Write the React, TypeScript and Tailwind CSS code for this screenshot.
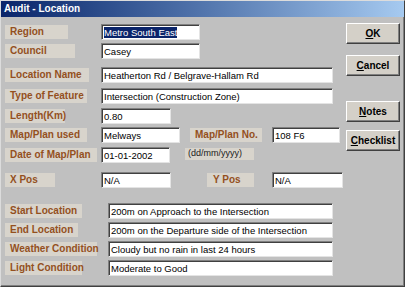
import type { ReactNode } from "react";

function Label({
  w,
  children,
  className = "",
}: {
  w: string;
  children: ReactNode;
  className?: string;
}) {
  return (
    <div
      className={`${w} h-[14px] mt-[1px] shrink-0 bg-[#d8d4cc] text-[#94501e] font-bold text-[10px] leading-[14px] pl-[5px] whitespace-nowrap ${className}`}
    >
      {children}
    </div>
  );
}

function Field({
  w,
  value,
  selected = false,
  className = "",
}: {
  w: string;
  value: string;
  selected?: boolean;
  className?: string;
}) {
  return (
    <div
      className={`${w} h-[16px] shrink-0 bg-white border border-t-[#808080] border-l-[#808080] border-r-[#e4e4e4] border-b-[#e4e4e4] shadow-[inset_1px_1px_0_#404040] pl-[2px] pt-[1px] text-[9.5px] leading-[13px] text-black whitespace-nowrap overflow-hidden ${className}`}
    >
      {selected ? (
        <span className="bg-[#0a246a] text-white">{value}</span>
      ) : (
        value
      )}
    </div>
  );
}

function Button({ mnemonic, rest, className = "" }: { mnemonic: string; rest: string; className?: string }) {
  return (
    <button
      className={`w-[54px] h-[21px] bg-[#d4d0c8] border border-t-white border-l-white border-r-[#404040] border-b-[#404040] shadow-[inset_-1px_-1px_0_#808080] text-[10px] font-bold text-black leading-none ${className}`}
    >
      <span className="underline">{mnemonic}</span>
      {rest}
    </button>
  );
}

export default function App() {
  return (
    <div className="min-h-screen bg-white">
      <div className="w-[405px] h-[287px] bg-[#c0c0c0] border-t border-l border-t-[#dcdcdc] border-l-[#dcdcdc] border-r border-b border-r-[#404040] border-b-[#404040] shadow-[inset_-1px_-1px_0_#808080] flex flex-col font-['Liberation_Sans',Arial,sans-serif]">
        <div className="h-[16px] shrink-0 bg-gradient-to-r from-[#0a246a] to-[#a6caf0] text-white font-bold text-[10px] leading-[16px] pl-[3px]">
          Audit - Location
        </div>

        <div className="flex">
          <div className="w-[345px] shrink-0 flex flex-col">
            <div className="flex mt-[7px]">
              <div className="w-[100px] shrink-0 pl-[4px]">
                <Label w="w-[63px]" className="mt-0 h-[13px] leading-[13px]">Region</Label>
              </div>
              <Field w="w-[99px]" value="Metro South East" selected />
            </div>

            <div className="flex mt-[3px]">
              <div className="w-[100px] shrink-0 pl-[4px]">
                <Label w="w-[70px]" className="mt-0">Council</Label>
              </div>
              <Field w="w-[99px]" value="Casey" />
            </div>

            <div className="flex mt-[8px]">
              <div className="w-[100px] shrink-0 pl-[4px]">
                <Label w="w-[84px]">Location Name</Label>
              </div>
              <Field w="w-[232px]" value="Heatherton Rd / Belgrave-Hallam Rd" />
            </div>

            <div className="flex mt-[5px]">
              <div className="w-[100px] shrink-0 pl-[4px]">
                <Label w="w-[82px]">Type of Feature</Label>
              </div>
              <Field w="w-[232px]" value="Intersection (Construction Zone)" />
            </div>

            <div className="flex mt-[4px]">
              <div className="w-[100px] shrink-0 pl-[4px]">
                <Label w="w-[60px]">Length(Km)</Label>
              </div>
              <Field w="w-[70px]" value="0.80" />
            </div>

            <div className="flex mt-[3px]">
              <div className="w-[100px] shrink-0 pl-[4px]">
                <Label w="w-[82px]">Map/Plan used</Label>
              </div>
              <Field w="w-[79px]" value="Melways" />
              <Label w="w-[72px]" className="ml-[10px] pl-[4px]">Map/Plan No.</Label>
              <Field w="w-[68px]" value="108 F6" className="ml-[10px]" />
            </div>

            <div className="flex mt-[4px]">
              <div className="w-[100px] shrink-0 pl-[4px]">
                <Label w="w-[92px]">Date of Map/Plan</Label>
              </div>
              <Field w="w-[69px]" value="01-01-2002" />
              <div className="ml-[15px] mt-[1px] w-[69px] h-[12px] bg-[#d8d4cc] text-[9px] leading-[11px] text-[#202020] pl-[3px] whitespace-nowrap">
                (dd/mm/yyyy)
              </div>
            </div>

            <div className="flex mt-[9px]">
              <div className="w-[100px] shrink-0 pl-[4px]">
                <Label w="w-[50px]" className="-mt-[2px]">X Pos</Label>
              </div>
              <Field w="w-[70px]" value="N/A" />
              <Label w="w-[47px]" className="ml-[36px] -mt-[2px] pl-[6px]">Y Pos</Label>
              <Field w="w-[71px]" value="N/A" className="ml-[18px]" />
            </div>

            <div className="flex mt-[15px]">
              <div className="w-[107px] shrink-0 pl-[4px]">
                <Label w="w-[77px]">Start Location</Label>
              </div>
              <Field w="w-[225px]" value="200m on Approach to the Intersection" />
            </div>

            <div className="flex mt-[3px]">
              <div className="w-[107px] shrink-0 pl-[4px]">
                <Label w="w-[73px]">End Location</Label>
              </div>
              <Field w="w-[225px]" value="200m on the Departure side of the Intersection" />
            </div>

            <div className="flex mt-[3px]">
              <div className="w-[107px] shrink-0 pl-[4px]">
                <Label w="w-[92px]">Weather Condition</Label>
              </div>
              <Field w="w-[225px]" value="Cloudy but no rain in last 24 hours" />
            </div>

            <div className="flex mt-[3px]">
              <div className="w-[107px] shrink-0 pl-[4px]">
                <Label w="w-[77px]">Light Condition</Label>
              </div>
              <Field w="w-[225px]" value="Moderate to Good" />
            </div>
          </div>

          <div className="flex flex-col">
            <Button mnemonic="O" rest="K" className="mt-[6px]" />
            <Button mnemonic="C" rest="ancel" className="mt-[11px]" />
            <Button mnemonic="N" rest="otes" className="mt-[25px]" />
            <Button mnemonic="C" rest="hecklist" className="mt-[8px]" />
          </div>
        </div>
      </div>
    </div>
  );
}
